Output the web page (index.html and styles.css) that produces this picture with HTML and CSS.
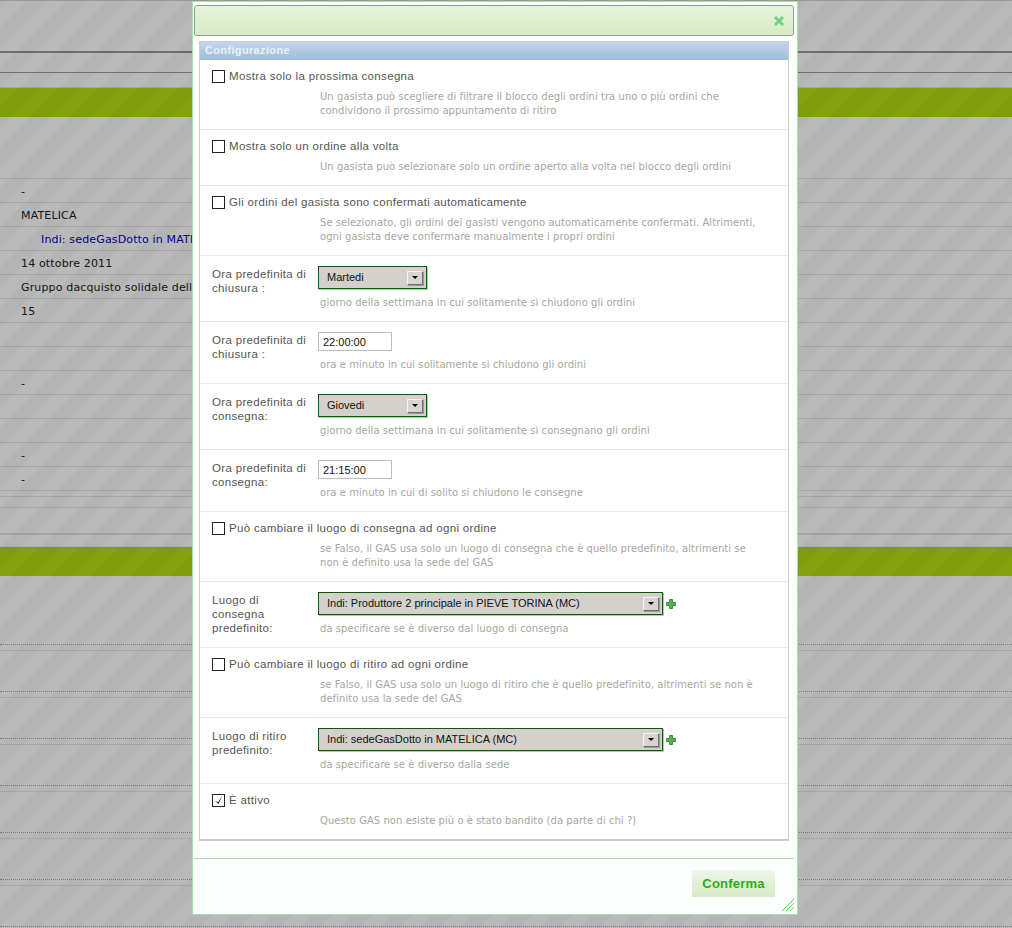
FILE: index.html
```html
<!DOCTYPE html>
<html lang="it">
<head>
  <meta charset="UTF-8">
  <title>Configurazione</title>
  <link rel="stylesheet" href="styles.css">
</head>
<body>
  <div class="page">
    <div class="rule-thick"></div>
    <div class="rule-thin"></div>
    <div class="rule-light"></div>
    <div class="band"></div>
    <div class="gap-top"></div>
    <div class="info-row">-</div>
    <div class="info-row">MATELICA</div>
    <div class="info-row"><a class="info-link">Indi: sedeGasDotto in MATELICA (MC)</a></div>
    <div class="info-row">14 ottobre 2011</div>
    <div class="info-row">Gruppo dacquisto solidale della citt&agrave;</div>
    <div class="info-row">15</div>
    <div class="info-row"></div>
    <div class="info-row"></div>
    <div class="info-row">-</div>
    <div class="info-row"></div>
    <div class="info-row"></div>
    <div class="info-row">-</div>
    <div class="info-row">-</div>
    <div class="line-a"></div>
    <div class="line-b"></div>
    <div class="line-c"></div>
    <div class="line-d"></div>
    <div class="band"></div>
    <div class="gap-bottom"></div>
    <div class="dot-row"></div>
    <div class="dot-row"></div>
    <div class="dot-row"></div>
    <div class="dot-row"></div>
    <div class="dot-row"></div>
    <div class="dot-row"></div>
    <div class="dot-row"></div>
  </div>

  <div class="overlay"></div>

  <div class="dialog">
    <div class="titlebar">
      <svg class="close-icon" width="10" height="10" viewBox="0 0 10 10">
        <path d="M0 2 L2 0 L5 3 L8 0 L10 2 L7 5 L10 8 L8 10 L5 7 L2 10 L0 8 L3 5 Z" fill="#6fd27c"/>
      </svg>
    </div>

    <div class="panel">
      <div class="panel-head">Configurazione</div>

      <div class="row">
        <label class="check-label"><span class="check"></span>Mostra solo la prossima consegna</label>
        <p class="help">Un gasista può scegliere di filtrare il blocco degli ordini tra uno o più ordini che condividono il prossimo appuntamento di ritiro</p>
      </div>

      <div class="row">
        <label class="check-label"><span class="check"></span>Mostra solo un ordine alla volta</label>
        <p class="help">Un gasista può selezionare solo un ordine aperto alla volta nel blocco degli ordini</p>
      </div>

      <div class="row">
        <label class="check-label"><span class="check"></span>Gli ordini del gasista sono confermati automaticamente</label>
        <p class="help">Se selezionato, gli ordini dei gasisti vengono automaticamente confermati. Altrimenti, ogni gasista deve confermare manualmente i propri ordini</p>
      </div>

      <div class="row">
        <label class="field-label">Ora predefinita di chiusura :</label>
        <div class="field">
          <div class="picker picker-short">Martedi<span class="picker-btn"><span class="picker-arrow"></span></span></div>
        </div>
        <p class="help">giorno della settimana in cui solitamente si chiudono gli ordini</p>
      </div>

      <div class="row">
        <label class="field-label">Ora predefinita di chiusura :</label>
        <div class="field"><input class="time" type="text" value="22:00:00"></div>
        <p class="help">ora e minuto in cui solitamente si chiudono gli ordini</p>
      </div>

      <div class="row">
        <label class="field-label">Ora predefinita di consegna:</label>
        <div class="field">
          <div class="picker picker-short">Giovedi<span class="picker-btn"><span class="picker-arrow"></span></span></div>
        </div>
        <p class="help">giorno della settimana in cui solitamente si consegnano gli ordini</p>
      </div>

      <div class="row">
        <label class="field-label">Ora predefinita di consegna:</label>
        <div class="field"><input class="time" type="text" value="21:15:00"></div>
        <p class="help">ora e minuto in cui di solito si chiudono le consegne</p>
      </div>

      <div class="row">
        <label class="check-label"><span class="check"></span>Può cambiare il luogo di consegna ad ogni ordine</label>
        <p class="help">se Falso, il GAS usa solo un luogo di consegna che è quello predefinito, altrimenti se non è definito usa la sede del GAS</p>
      </div>

      <div class="row">
        <label class="field-label">Luogo di consegna predefinito:</label>
        <div class="field">
          <div class="picker picker-long">Indi: Produttore 2 principale in PIEVE TORINA (MC)<span class="picker-btn"><span class="picker-arrow"></span></span></div>
          <svg class="add-icon" width="10" height="10" viewBox="0 0 10 10">
            <path d="M3.5 0.5 H6.5 V3.5 H9.5 V6.5 H6.5 V9.5 H3.5 V6.5 H0.5 V3.5 H3.5 Z" fill="#54b454" stroke="#3f8f3f" stroke-width="1"/>
          </svg>
        </div>
        <p class="help">da specificare se è diverso dal luogo di consegna</p>
      </div>

      <div class="row">
        <label class="check-label"><span class="check"></span>Può cambiare il luogo di ritiro ad ogni ordine</label>
        <p class="help">se Falso, il GAS usa solo un luogo di ritiro che è quello predefinito, altrimenti se non è definito usa la sede del GAS</p>
      </div>

      <div class="row">
        <label class="field-label">Luogo di ritiro predefinito:</label>
        <div class="field">
          <div class="picker picker-long">Indi: sedeGasDotto in MATELICA (MC)<span class="picker-btn"><span class="picker-arrow"></span></span></div>
          <svg class="add-icon" width="10" height="10" viewBox="0 0 10 10">
            <path d="M3.5 0.5 H6.5 V3.5 H9.5 V6.5 H6.5 V9.5 H3.5 V6.5 H0.5 V3.5 H3.5 Z" fill="#54b454" stroke="#3f8f3f" stroke-width="1"/>
          </svg>
        </div>
        <p class="help">da specificare se è diverso dalla sede</p>
      </div>

      <div class="row row-last">
        <label class="check-label">
          <span class="check">
            <svg width="11" height="11" viewBox="0 0 11 11"><path d="M1.8 5.6 L5 7.2 L9.4 0.8 L5.4 9 Z" fill="#222"/></svg>
          </span>È attivo
        </label>
        <p class="help">Questo GAS non esiste più o è stato bandito (da parte di chi ?)</p>
      </div>
    </div>

    <div class="footer">
      <button class="confirm" type="button">Conferma</button>
    </div>

    <svg class="grip" width="13" height="13" viewBox="0 0 13 13">
      <path d="M0 12 L12 0 M4 12 L12 4 M8 12 L12 8" stroke="#5ed06c" stroke-width="1" fill="none"/>
    </svg>
  </div>
</body>
</html>
```

FILE: styles.css
```css
html, body { margin: 0; height: 928px; overflow: hidden; }
body { font-family: "DejaVu Sans", sans-serif; font-size: 11px; color: #222; background: #fff; }

/* page behind the dialog */
.page { border-top: 1px solid #dcd2ca; }
.rule-thick { height: 50px; border-bottom: 2px solid #999; }
.rule-thin { height: 19px; border-bottom: 1px solid #999; }
.rule-light { height: 14px; border-bottom: 1px solid #e2e2e2; }
.band { height: 29px; background: #b6dc10; }
.gap-top { height: 61px; border-bottom: 1px solid #e6e6e6; }
.info-row { height: 23px; line-height: 26px; padding-left: 21px; letter-spacing: .15px; border-bottom: 1px solid #e6e6e6; white-space: nowrap; }
.info-link { color: #0000d0; padding-left: 20px; }
.line-a { height: 5px; border-bottom: 1px solid #e6e6e6; }
.line-b { height: 10px; border-bottom: 1px solid #e6e6e6; }
.line-c { height: 25px; border-bottom: 2px solid #e2e2e2; }
.line-d { height: 11px; border-bottom: 1px solid #f0f0f0; }
.gap-bottom { height: 68px; }
.dot-row { height: 5px; margin-bottom: 40px; border-top: 1px dotted #aaa; border-bottom: 1px solid #e8e8e8; }

.overlay {
  position: absolute;
  top: 0;
  left: 0;
  width: 100%;
  height: 100%;
  background-image: linear-gradient(135deg,
    rgba(0,0,0,.275) 25%, rgba(0,0,0,.295) 25%, rgba(0,0,0,.295) 50%,
    rgba(0,0,0,.275) 50%, rgba(0,0,0,.275) 75%, rgba(0,0,0,.295) 75%);
  background-size: 40px 40px;
  background-position: 8px 0;
}

/* dialog */
.dialog {
  position: absolute;
  top: 1px;
  left: 192px;
  width: 604px;
  height: 912px;
  border: 1px solid #a4e2ae;
  background: #fcfffd;
}
.titlebar {
  display: flex;
  justify-content: flex-end;
  align-items: center;
  height: 29px;
  margin: 3px 3px 0 1px;
  padding-right: 9px;
  border: 1px solid #999;
  border-radius: 3px;
  background: linear-gradient(#e6f3dc, #d8ecc4);
}
.panel {
  margin: 5px 8px 0 6px;
  border: 1px solid #ccc;
  border-bottom-width: 2px;
  background: #fff;
}
.panel-head {
  height: 18px;
  padding-left: 5px;
  font-family: "Liberation Sans", sans-serif;
  font-size: 11px;
  font-weight: bold;
  line-height: 16px;
  letter-spacing: .35px;
  color: #e8f0f8;
  background: linear-gradient(#c4d6ec, #9cbcd8);
}
.row {
  display: grid;
  grid-template-columns: 106px 1fr;
  row-gap: 7px;
  padding: 10px 24px 11px 12px;
  border-bottom: 1px solid #e8e8e8;
}
.row-last { border-bottom: 0; }
.check-label {
  display: flex;
  align-items: flex-start;
  grid-column: 1 / 3;
  height: 13px;
  font-family: "Liberation Sans", sans-serif;
  font-size: 11.5px;
  line-height: 12px;
  letter-spacing: .33px;
  color: #555;
  white-space: nowrap;
}
.check {
  display: flex;
  align-items: center;
  justify-content: center;
  box-sizing: border-box;
  width: 13px;
  height: 13px;
  margin-right: 4px;
  border: 1px solid #222;
  background: #fff;
}
.field-label {
  grid-row: span 2;
  padding-top: 1px;
  padding-right: 8px;
  font-family: "Liberation Sans", sans-serif;
  font-size: 11.5px;
  line-height: 14px;
  letter-spacing: .33px;
  color: #555;
}
.field { display: flex; align-items: center; }
.help {
  grid-column: 2;
  margin: 0;
  padding-left: 2px;
  font-size: 10px;
  line-height: 14px;
  letter-spacing: .05px;
  color: #a6a6a0;
}

.picker {
  position: relative;
  box-sizing: border-box;
  height: 23px;
  padding-left: 8px;
  font-family: "Liberation Sans", sans-serif;
  font-size: 11px;
  line-height: 20px;
  color: #111;
  background: #d4d0cc;
  border: 1px solid #0a5a0a;
  box-shadow: 1px 1px 0 #98dc98;
}
.picker-short { width: 109px; }
.picker-long { width: 345px; }
.picker-btn {
  position: absolute;
  top: 4px;
  right: 3px;
  box-sizing: border-box;
  width: 16px;
  height: 14px;
  background: #d8d4d0;
  border: 1px solid;
  border-color: #f4f4f4 #707070 #707070 #f4f4f4;
  box-shadow: 1px 1px 0 #999;
}
.picker-arrow {
  position: absolute;
  top: 4px;
  left: 4px;
  border: 3px solid transparent;
  border-top: 3px solid #000;
  border-bottom: 0;
}
.add-icon { margin-left: 3px; }
.time {
  box-sizing: border-box;
  width: 74px;
  height: 19px;
  padding: 0 4px;
  font-family: "Liberation Sans", sans-serif;
  font-size: 11px;
  color: #111;
  border: 1px solid #bbb;
  background: #fff;
}

.footer {
  display: flex;
  justify-content: flex-end;
  margin: 17px 3px 0 1px;
  padding: 11px 19px 0 0;
  border-top: 1px solid #a4e2ae;
}
.confirm {
  width: 83px;
  height: 27px;
  padding: 0;
  border: 0;
  border-radius: 1px;
  font-family: "Liberation Sans", sans-serif;
  font-size: 13px;
  font-weight: bold;
  letter-spacing: .2px;
  color: #24b014;
  background: linear-gradient(#eef6e8, #d6ebc4);
}
.grip { position: absolute; right: 2px; bottom: 2px; }
```
